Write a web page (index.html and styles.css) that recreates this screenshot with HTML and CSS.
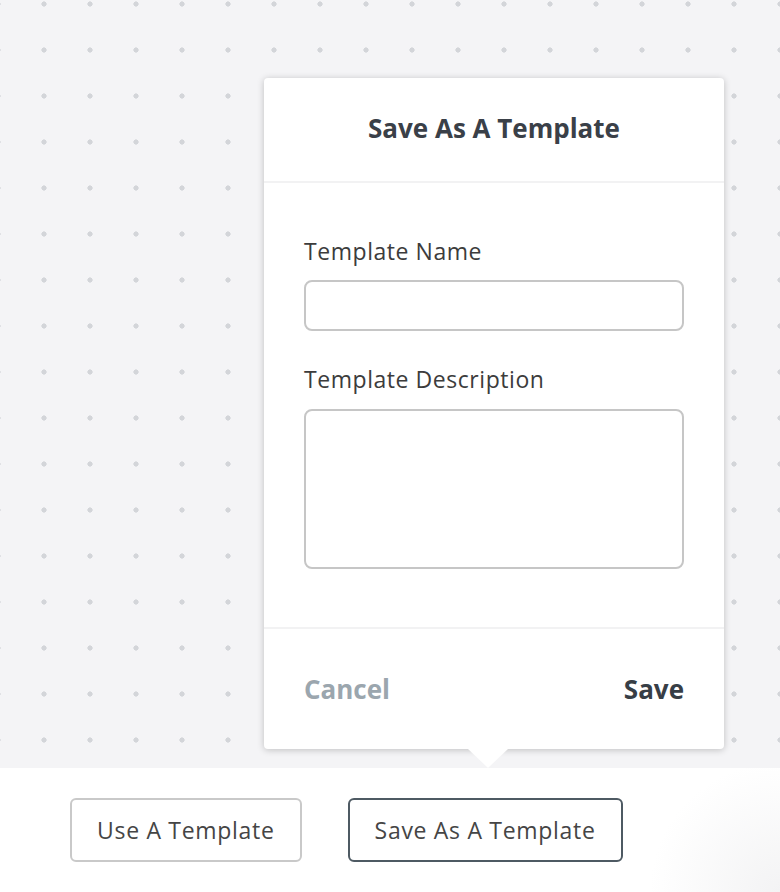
FILE: index.html
```html
<!DOCTYPE html>
<html lang="en">
<head>
  <meta charset="UTF-8" />
  <meta name="viewport" content="width=device-width, initial-scale=1.0" />
  <title>Save As A Template</title>
  <link rel="stylesheet" href="styles.css">
</head>
<body>

<div class="canvas">
  <div class="popover">
    <div class="popover-head">
      <h2>Save As A Template</h2>
    </div>
    <div class="popover-body">
      <label for="tpl-name">Template Name</label>
      <input type="text" id="tpl-name" class="field">
      <label for="tpl-desc">Template Description</label>
      <textarea id="tpl-desc" class="field area"></textarea>
    </div>
    <div class="popover-foot">
      <button class="link cancel">Cancel</button>
      <button class="link save">Save</button>
    </div>
    <span class="arrow"></span>
  </div>
</div>

<div class="toolbar">
  <button class="outline">Use A Template</button>
  <button class="outline active">Save As A Template</button>
</div>

</body>
</html>
```

FILE: styles.css
```css
* {
  box-sizing: border-box;
  margin: 0;
  padding: 0;
}
body {
  font-family: 'Open Sans', 'Liberation Sans', sans-serif;
  background: #fff;
  color: #3b3b3b;
  width: 780px;
  height: 892px;
  overflow: hidden;
}
.canvas {
  position: relative;
  height: 768px;
  background-color: #f4f4f6;
  background-image: radial-gradient(circle, #d3d5d9 2.3px, transparent 2.9px);
  background-size: 46px 46px;
  background-position: 21px -19px;
}
.popover {
  position: absolute;
  left: 264px;
  top: 78px;
  width: 460px;
  height: 671px;
  background: #fff;
  border-radius: 4px;
  box-shadow: 0 1px 7px rgba(0, 0, 0, 0.22);
  display: flex;
  flex-direction: column;
}
.popover-head {
  height: 105px;
  border-bottom: 2px solid #f2f2f3;
  display: flex;
  align-items: center;
  justify-content: center;
}
.popover-head h2 {
  font-size: 26px;
  font-weight: 700;
  color: #3a4048;
  line-height: 30px;
  margin-bottom: 3px;
}
.popover-body {
  padding: 54px 40px 0;
  display: flex;
  flex-direction: column;
  flex: 1;
  border-bottom: 2px solid #f2f2f3;
}
.popover-body label {
  font-size: 23px;
  letter-spacing: 0.55px;
  color: #3c3c3c;
  line-height: 28px;
  margin-bottom: 15px;
}
.popover-body .field + label {
  margin-bottom: 16px;
}
.field {
  display: block;
  width: 380px;
  height: 51px;
  border: 2px solid #c6c6c6;
  border-radius: 8px;
  font-family: inherit;
  font-size: 18px;
  padding: 8px 12px;
  margin-bottom: 34px;
  resize: none;
  outline: none;
}
.field.area {
  height: 160px;
  margin-bottom: 0;
}
.popover-foot {
  height: 120px;
  padding: 0 40px;
  display: flex;
  align-items: center;
  justify-content: space-between;
}
.link {
  background: none;
  border: none;
  font-family: inherit;
  font-size: 26px;
  font-weight: 700;
  line-height: 30px;
}
.cancel {
  color: #9ba6ae;
}
.save {
  color: #373e46;
}
.arrow {
  position: absolute;
  left: 204px;
  bottom: -19px;
  width: 0;
  height: 0;
  border-left: 20px solid transparent;
  border-right: 20px solid transparent;
  border-top: 19px solid #fff;
}
.toolbar {
  height: 124px;
  padding: 30px 0 0 70px;
  display: flex;
  align-items: flex-start;
  gap: 46px;
  background: radial-gradient(circle at 100% 100%, #f3f3f4 0, #fff 130px);
}
.outline {
  height: 64px;
  padding: 0 25px;
  background: #fff;
  border: 2px solid #c9c9c9;
  border-radius: 6px;
  font-family: inherit;
  font-size: 23px;
  letter-spacing: 0.7px;
  color: #454545;
}
.outline.active {
  border-color: #4e5a63;
}
```
